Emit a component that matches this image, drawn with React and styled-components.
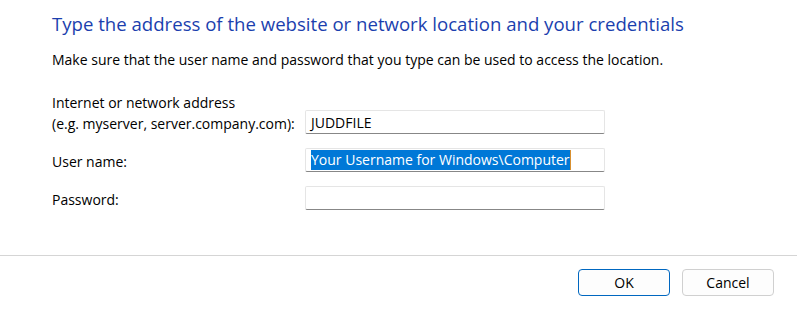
import React from 'react';
import styled, { createGlobalStyle } from 'styled-components';

const GlobalStyle = createGlobalStyle`
  html, body {
    margin: 0;
    padding: 0;
    background: #ffffff;
  }
  body {
    font-family: "Open Sans", "Noto Sans", "Liberation Sans", sans-serif;
    color: #000;
  }
`;

const Dialog = styled.div`
  width: 797px;
  height: 322px;
  display: flex;
  flex-direction: column;
  background: #fff;
`;

const Body = styled.div`
  flex: 1;
  padding: 11px 0 0 52px;
  display: flex;
  flex-direction: column;
`;

const Title = styled.h1`
  margin: 0;
  font-size: 18.6px;
  font-weight: 400;
  line-height: 26px;
  color: #1b3fae;
`;

const Intro = styled.p`
  margin: 12px 0 0;
  font-size: 14px;
  line-height: 21px;
`;

const Form = styled.div`
  margin-top: 22px;
  display: grid;
  grid-template-columns: 253px 300px;
  row-gap: 14px;
  align-items: end;
`;

const Label = styled.label`
  font-size: 14px;
  line-height: 21px;
`;

const Field = styled.div`
  box-sizing: border-box;
  height: 24px;
  border: 1px solid #e5e5e5;
  border-bottom: 1px solid #878787;
  border-radius: 2px;
  display: flex;
  align-items: center;
  padding: 0 5px;
  font-size: 14px;
  background: #fff;
`;

const Selected = styled.span`
  background: #0078d7;
  color: #fff;
  line-height: 20px;
  border-right: 1px solid #d89030;
`;

const Separator = styled.div`
  height: 1px;
  background: #d5d5d5;
`;

const Footer = styled.div`
  height: 66px;
  display: flex;
  justify-content: flex-end;
  align-items: flex-start;
  gap: 12px;
  padding: 13px 23px 0 0;
  box-sizing: border-box;
`;

const Button = styled.button`
  width: 92px;
  height: 27px;
  box-sizing: border-box;
  border-radius: 4px;
  background: #fdfdfd;
  border: 1px solid ${({ $primary }) => ($primary ? '#0067c0' : '#d0d0d0')};
  font-family: inherit;
  font-size: 14px;
  color: #000;
  padding: 0;
`;

export default function App() {
  return (
    <>
      <GlobalStyle />
      <Dialog>
        <Body>
          <Title>Type the address of the website or network location and your credentials</Title>
          <Intro>Make sure that the user name and password that you type can be used to access the location.</Intro>
          <Form>
            <Label>
              Internet or network address
              <br />
              (e.g. myserver, server.company.com):
            </Label>
            <Field>JUDDFILE</Field>
            <Label>User name:</Label>
            <Field>
              <Selected>Your Username for Windows\Computer</Selected>
            </Field>
            <Label>Password:</Label>
            <Field />
          </Form>
        </Body>
        <Separator />
        <Footer>
          <Button $primary>OK</Button>
          <Button>Cancel</Button>
        </Footer>
      </Dialog>
    </>
  );
}
